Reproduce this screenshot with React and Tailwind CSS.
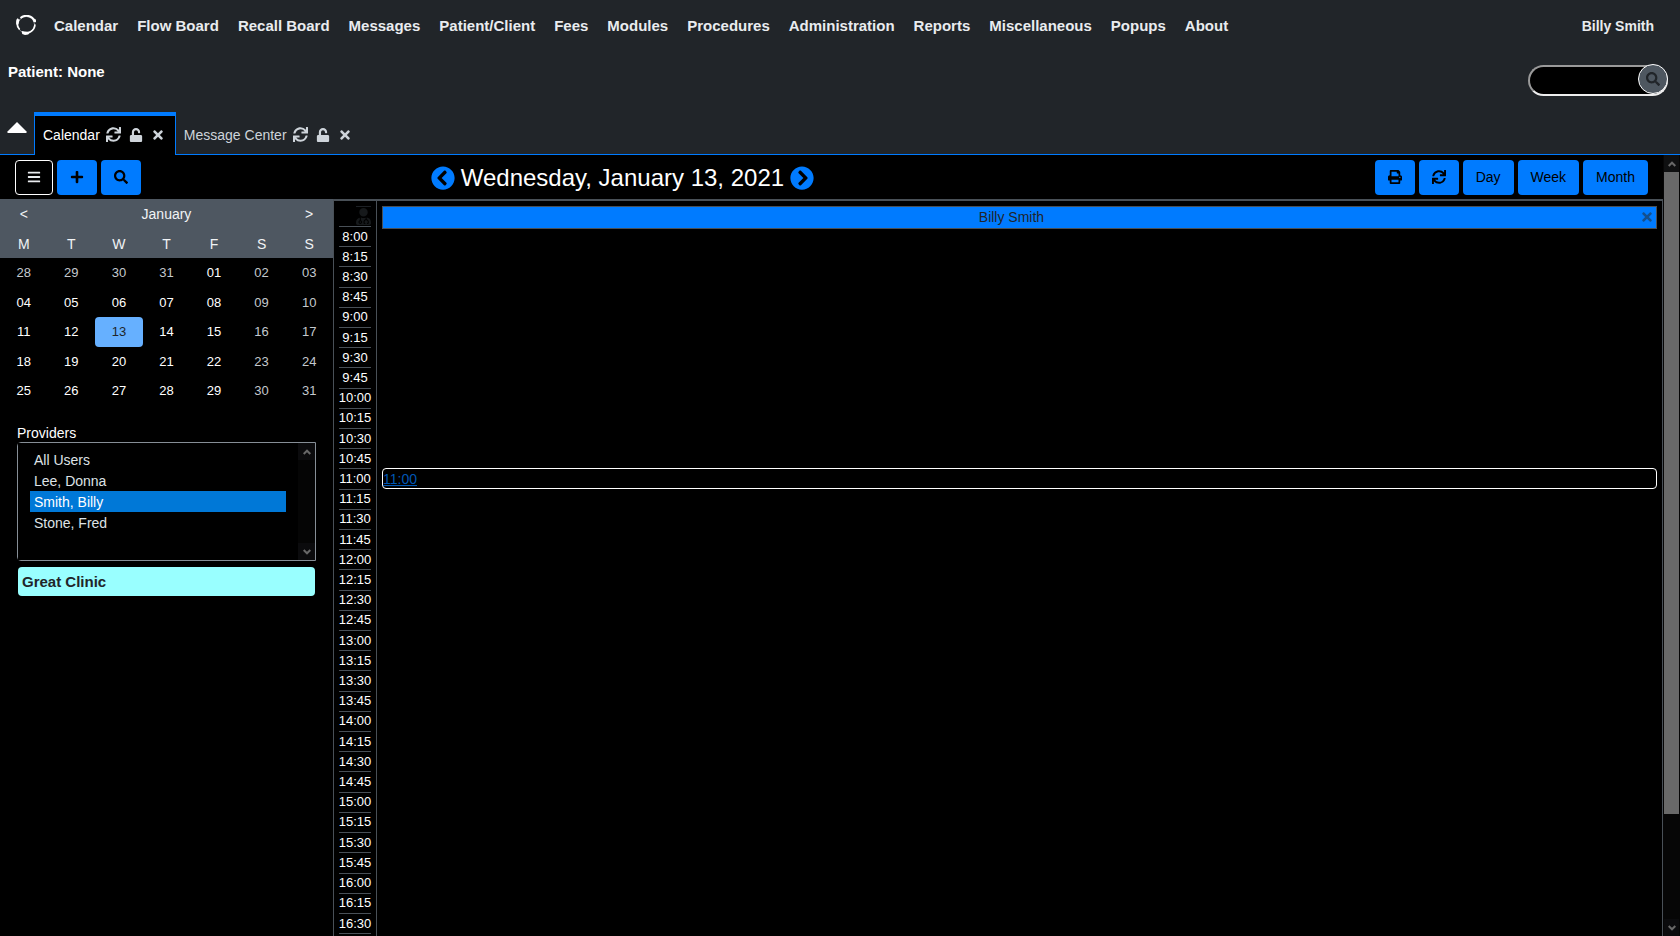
import React from "react";
import {
  FaSync,
  FaUnlock,
  FaTimes,
  FaBars,
  FaPlus,
  FaSearch,
  FaPrint,
  FaChevronCircleLeft,
  FaChevronCircleRight,
  FaUserMd,
} from "react-icons/fa";

const MENU = [
  "Calendar", "Flow Board", "Recall Board", "Messages", "Patient/Client", "Fees", "Modules",
  "Procedures", "Administration", "Reports", "Miscellaneous", "Popups", "About",
];

const WEEKDAYS = ["M", "T", "W", "T", "F", "S", "S"];

const WEEKS = [
  ["28", "29", "30", "31", "01", "02", "03"],
  ["04", "05", "06", "07", "08", "09", "10"],
  ["11", "12", "13", "14", "15", "16", "17"],
  ["18", "19", "20", "21", "22", "23", "24"],
  ["25", "26", "27", "28", "29", "30", "31"],
];

const PROVIDERS = ["All Users", "Lee, Donna", "Smith, Billy", "Stone, Fred"];

// Quarter-hour slots from 8:00 to 16:30
const SLOTS = Array.from({ length: 35 }, (_, i) => {
  const minutes = 480 + i * 15;
  return `${Math.floor(minutes / 60)}:${String(minutes % 60).padStart(2, "0")}`;
});

function Logo() {
  return (
    <svg viewBox="0 0 20 20" className="size-5" fill="none" aria-hidden="true">
      <circle cx="10.200" cy="9.800" r="8.300" strokeWidth="1" stroke="#8d9195" />
      <path d="M4.500 3.100A8.900 8.900 0 0 1 18.700 6.300" stroke="#fff" strokeWidth="2" />
      <path d="M17 3.200 19.900 4.600 20 7.200 17.600 6.900Z" fill="#fff" />
      <path d="M2 3.600A10.500 10.500 0 0 0 3.600 14.600" stroke="#fff" strokeWidth="1.600" />
      <path d="M.6 4.200 3.600 4.400 2.400 9.600.3 9.400Z" fill="#fff" />
      <path d="M6 16.900A8.900 8.900 0 0 0 19 9.400" stroke="#fff" strokeWidth="1.600" />
      <path d="M5.900 16.300 14.500 17.100 12.200 19.500 9 19.900 6.200 18.900Z" fill="#fff" />
    </svg>
  );
}

function Chevron({ up }) {
  return (
    <svg viewBox="0 0 8 8" className="size-2" fill="none" stroke="#686868" strokeWidth="2" aria-hidden="true">
      {up ? <path d="M.7 6 4 2.700 7.300 6" /> : <path d="M.7 2 4 5.300 7.300 2" />}
    </svg>
  );
}

function TabTools({ name }) {
  return (
    <>
      <button type="button" aria-label={`Reload ${name}`} className="ml-[6px]"><FaSync className="size-[15px]" /></button>
      <button type="button" aria-label={`Lock ${name}`} className="ml-2"><FaUnlock className="size-[14px]" /></button>
      <button type="button" aria-label={`Close ${name}`} className="ml-2"><FaTimes className="size-[14px]" /></button>
    </>
  );
}

function BlueButton({ children, ...rest }) {
  return (
    <button type="button" className="flex h-[35px] items-center justify-center rounded bg-[#007bff] px-[13px] text-sm text-black" {...rest}>
      {children}
    </button>
  );
}

function Header() {
  return (
    <header className="bg-[#212529]">
      <nav className="flex h-[52px] items-center pr-[26px] pl-4 text-[15px] font-bold text-[#e9ecef]">
        <a href="#home" aria-label="Home" className="mr-[18px] pb-[2px]"><Logo /></a>
        <ul className="flex flex-1 gap-[19px] whitespace-nowrap">
          {MENU.map((item) => (
            <li key={item}><a href="#menu">{item}</a></li>
          ))}
        </ul>
        <a href="#user" className="text-sm">Billy Smith</a>
      </nav>
      <div className="flex h-[60px] items-start justify-between pr-3 pl-2 pt-3">
        <div className="text-[15px] font-bold leading-4 text-white">Patient: None</div>
        <form className="relative" onSubmit={(e) => e.preventDefault()}>
          <input
            type="text"
            aria-label="Search patients"
            className="mt-px block h-[31px] w-[140px] rounded-full border-2 border-t-[#9a9a9a] border-r-[#eee] border-b-[#eee] border-l-[#9a9a9a] bg-black px-3 text-sm text-white"
          />
          <button
            type="submit"
            aria-label="Search"
            className="absolute top-0 right-0 flex size-[30px] items-center justify-center rounded-full border border-white bg-[#4e5760] text-[#212529]"
          >
            <FaSearch className="size-[14px]" />
          </button>
        </form>
      </div>
      <div className="flex h-[43px] text-sm">
        <div className="flex w-[34px] items-start border-b border-[#007bff] pt-[10px] pl-[7px]">
          <button type="button" aria-label="Collapse header">
            <svg viewBox="0 0 20 11" className="h-[11px] w-5" fill="#fff" aria-hidden="true">
              <path d="M10 0 19.500 9.600V11H.5V9.600Z" />
            </svg>
          </button>
        </div>
        <div className="flex items-center border-x border-t-4 border-[#007bff] bg-black pr-[10px] pb-[2px] pl-2 text-[#ced4da]">
          <span className="text-white">Calendar</span>
          <TabTools name="Calendar" />
        </div>
        <div className="flex flex-1 items-center border-b border-[#007bff] pt-[3px] pl-2 text-[#ced4da]">
          <span>Message Center</span>
          <TabTools name="Message Center" />
        </div>
      </div>
    </header>
  );
}

function Toolbar() {
  return (
    <div className="flex h-[44px] items-center">
      <div className="flex w-1/4 gap-1 pl-[15px]">
        <button type="button" aria-label="Toggle sidebar" className="flex h-[35px] w-[38px] items-center justify-center rounded border border-white text-[#e9ecef]">
          <FaBars className="size-[14px]" />
        </button>
        <BlueButton aria-label="Add"><FaPlus className="size-[14px]" /></BlueButton>
        <BlueButton aria-label="Search"><FaSearch className="size-[14px]" /></BlueButton>
      </div>
      <div className="flex flex-1 items-center gap-[6px] pt-px pl-[15px]">
        <button type="button" aria-label="Previous day" className="text-[#007bff]"><FaChevronCircleLeft className="size-6" /></button>
        <h1 className="text-2xl text-white">Wednesday, January 13, 2021</h1>
        <button type="button" aria-label="Next day" className="text-[#007bff]"><FaChevronCircleRight className="size-6" /></button>
      </div>
      <div className="flex gap-1 pr-[15px]">
        <BlueButton aria-label="Print"><FaPrint className="size-[14px]" /></BlueButton>
        <BlueButton aria-label="Refresh"><FaSync className="size-[14px]" /></BlueButton>
        <BlueButton>Day</BlueButton>
        <BlueButton>Week</BlueButton>
        <BlueButton>Month</BlueButton>
      </div>
    </div>
  );
}

function MiniCalendar() {
  return (
    <table className="w-full table-fixed text-center text-[13px] text-white">
      <thead className="bg-[#4e5761] text-sm text-[#f1f3f5]">
        <tr className="h-[30px]">
          <th className="p-0 font-normal"><button type="button" aria-label="Previous month">&lt;</button></th>
          <th className="p-0 font-normal" colSpan={5}>January</th>
          <th className="p-0 font-normal"><button type="button" aria-label="Next month">&gt;</button></th>
        </tr>
        <tr className="h-[29px]">
          {WEEKDAYS.map((d, i) => <th key={i} className="p-0 font-normal">{d}</th>)}
        </tr>
      </thead>
      <tbody>
        {WEEKS.map((week, w) => (
          <tr key={w} className="h-[30px] even:h-[29px]">
            {week.map((day, d) => {
              const selected = w === 2 && d === 2;
              const muted = d > 4 || (w === 0 && d < 4);
              return (
                <td
                  key={d}
                  className={selected ? "rounded bg-[#66b0ff] p-0 text-[#212529]" : muted ? "p-0 text-[#c4c9ce]" : "p-0"}
                >
                  {day}
                </td>
              );
            })}
          </tr>
        ))}
      </tbody>
    </table>
  );
}

function Sidebar() {
  return (
    <aside className="w-[333px] shrink-0">
      <MiniCalendar />
      <div className="pt-4 pr-[17px] pl-[17px] text-sm">
        <label htmlFor="providers" className="block h-5 leading-[22px] text-white">Providers</label>
        <div className="flex h-[119px] rounded-l border border-[#868e96]">
          <select
            id="providers"
            multiple
            size={5}
            defaultValue={["Smith, Billy"]}
            className="min-w-0 flex-1 appearance-none overflow-hidden bg-black py-[6px] pr-[12px] pl-3 text-sm text-[#dee2e6] outline-none"
          >
            {PROVIDERS.map((p) => (
              <option
                key={p}
                value={p}
                className="h-[21px] px-1 pt-[3px] pb-0 checked:bg-linear-to-r checked:from-[#0078d7] checked:to-[#0078d7] checked:text-white checked:[-webkit-text-fill-color:#fff]"
              >
                {p}
              </option>
            ))}
          </select>
          <div className="flex w-[17px] flex-col bg-[#050505]" aria-hidden="true">
            <div className="flex h-[17px] items-center justify-center bg-[#0b0b0d]"><Chevron up /></div>
            <div className="flex-1" />
            <div className="flex h-[17px] items-center justify-center bg-[#0b0b0d]"><Chevron /></div>
          </div>
        </div>
        <div className="mx-px mt-[6px] flex h-[29px] items-center rounded bg-[#99ffff] px-1 pt-px text-[15px] font-bold text-[#212529]">
          Great Clinic
        </div>
      </div>
    </aside>
  );
}

function Schedule() {
  return (
    <section className="flex flex-1 border-x border-t-2 border-[#495057]">
      <div className="flex w-[43px] flex-col border-r border-[#495057] pr-[5px] pb-px pl-[5px]">
        <div className="flex h-[25px] flex-col items-end pt-[5px]">
          <div className="border-t border-[#1d2125] pt-px text-[#16191b]"><FaUserMd className="h-[17px] w-[15px]" /></div>
        </div>
        {SLOTS.map((time) => (
          <div key={time} className="flex min-h-5 flex-1 items-center justify-center border-t border-[#495057] text-[13px] leading-4 text-white">
            {time}
          </div>
        ))}
        <div className="h-[2px] border-t border-[#495057]" />
      </div>
      <div className="flex flex-1 flex-col px-[5px] pb-[3px]">
        <div className="h-[25px] pt-[5px]">
          <div className="flex h-[23px] items-center border border-[#495057] bg-[#007bff] pr-[2px] pb-px text-sm text-[#212529]">
            <span className="flex-1 text-center">Billy Smith</span>
            <button type="button" aria-label="Close provider" className="text-[#14508f]"><FaTimes className="size-[14px]" /></button>
          </div>
        </div>
        {SLOTS.map((time) => (
          <div key={time} className="flex min-h-5 flex-1">
            {time === "11:00" && (
              <div className="flex flex-1 items-center rounded border border-white pt-px text-sm leading-4">
                <a href="#slot" className="text-[#0056b3] underline">{time}</a>
              </div>
            )}
          </div>
        ))}
      </div>
    </section>
  );
}

function PageScrollbar() {
  return (
    <div className="flex w-[17px] shrink-0 flex-col bg-[#060606] px-px" aria-hidden="true">
      <div className="flex h-[17px] items-center justify-center bg-[#0f1011]"><Chevron up /></div>
      <div className="flex-[642] bg-[#696969]" />
      <div className="flex-[105]" />
      <div className="flex h-[17px] items-center justify-center bg-[#0b0b0d]"><Chevron /></div>
    </div>
  );
}

export default function App() {
  return (
    <div className="flex min-h-screen flex-col bg-black font-['Liberation_Sans',Arial,sans-serif]">
      <Header />
      <div className="flex flex-1">
        <main className="flex flex-1 flex-col">
          <Toolbar />
          <div className="flex flex-1">
            <Sidebar />
            <Schedule />
          </div>
        </main>
        <PageScrollbar />
      </div>
    </div>
  );
}
